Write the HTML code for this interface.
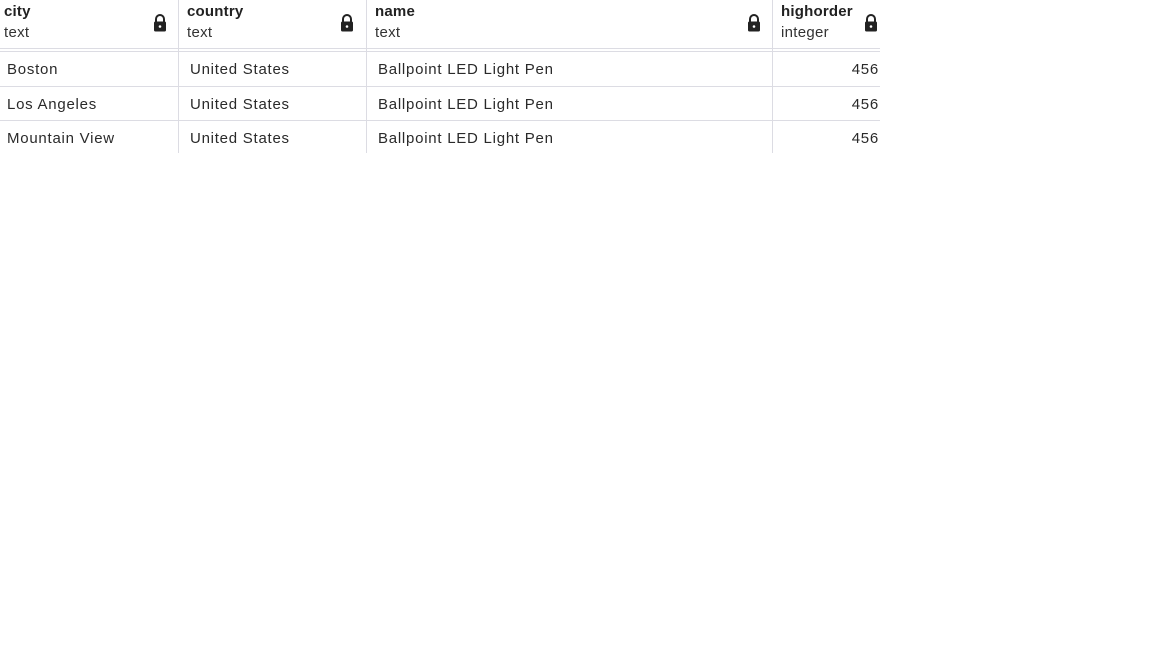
<!DOCTYPE html>
<html><head><style>
body{margin:0;width:1152px;height:648px;background:#fff;font-family:"Liberation Sans",sans-serif;color:#222;position:relative;overflow:hidden}
.a{position:absolute}
.v{position:absolute;top:0;width:1px;height:153px;background:#dcdce3}
.h{position:absolute;left:0;width:880px;height:1px;background:#dcdce3}
.hd{font-weight:bold;font-size:15px;top:3px;letter-spacing:0.2px}
.ty{font-size:15px;top:24px;color:#333;letter-spacing:0.3px}
.c{font-size:15px;color:#2a2a2a;letter-spacing:0.75px}
svg{position:absolute;top:14px}
</style></head><body>
<div class="v" style="left:178px"></div>
<div class="v" style="left:366px"></div>
<div class="v" style="left:772px"></div>
<div class="h" style="top:48px"></div>
<div class="h" style="top:51px"></div>
<div class="h" style="top:86px"></div>
<div class="h" style="top:120px"></div>

<div class="a hd" style="left:4px">city</div><div class="a ty" style="left:4px">text</div>
<div class="a hd" style="left:187px">country</div><div class="a ty" style="left:187px">text</div>
<div class="a hd" style="left:375px">name</div><div class="a ty" style="left:375px">text</div>
<div class="a hd" style="left:781px">highorder</div><div class="a ty" style="left:781px">integer</div>

<svg style="left:152px" width="16" height="18" viewBox="0 0 16 18"><path d="M4 8V5a4 4 0 0 1 8 0v3" fill="none" stroke="#222" stroke-width="2"/><rect x="2" y="7.5" width="12" height="10" rx="1.5" fill="#222"/><circle cx="8" cy="12.5" r="1.3" fill="#fff"/></svg>
<svg style="left:339px" width="16" height="18" viewBox="0 0 16 18"><path d="M4 8V5a4 4 0 0 1 8 0v3" fill="none" stroke="#222" stroke-width="2"/><rect x="2" y="7.5" width="12" height="10" rx="1.5" fill="#222"/><circle cx="8" cy="12.5" r="1.3" fill="#fff"/></svg>
<svg style="left:746px" width="16" height="18" viewBox="0 0 16 18"><path d="M4 8V5a4 4 0 0 1 8 0v3" fill="none" stroke="#222" stroke-width="2"/><rect x="2" y="7.5" width="12" height="10" rx="1.5" fill="#222"/><circle cx="8" cy="12.5" r="1.3" fill="#fff"/></svg>
<svg style="left:863px" width="16" height="18" viewBox="0 0 16 18"><path d="M4 8V5a4 4 0 0 1 8 0v3" fill="none" stroke="#222" stroke-width="2"/><rect x="2" y="7.5" width="12" height="10" rx="1.5" fill="#222"/><circle cx="8" cy="12.5" r="1.3" fill="#fff"/></svg>

<div class="a c" style="left:7px;top:61px">Boston</div>
<div class="a c" style="left:190px;top:61px">United States</div>
<div class="a c" style="left:378px;top:61px">Ballpoint LED Light Pen</div>
<div class="a c" style="left:772px;width:107px;text-align:right;top:61px">456</div>

<div class="a c" style="left:7px;top:96px">Los Angeles</div>
<div class="a c" style="left:190px;top:96px">United States</div>
<div class="a c" style="left:378px;top:96px">Ballpoint LED Light Pen</div>
<div class="a c" style="left:772px;width:107px;text-align:right;top:96px">456</div>

<div class="a c" style="left:7px;top:130px">Mountain View</div>
<div class="a c" style="left:190px;top:130px">United States</div>
<div class="a c" style="left:378px;top:130px">Ballpoint LED Light Pen</div>
<div class="a c" style="left:772px;width:107px;text-align:right;top:130px">456</div>
</body></html>
